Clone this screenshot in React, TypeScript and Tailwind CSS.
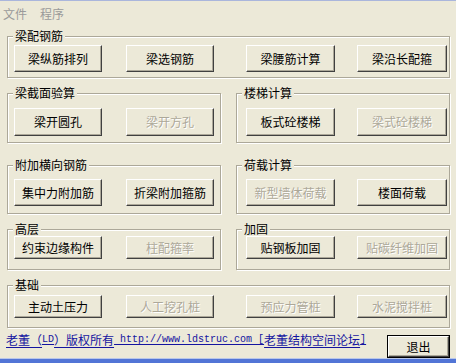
import React from "react";

function Btn({ label, disabled, cls }: { label: string; disabled?: boolean; cls: string }) {
  return (
    <div
      className={`${cls} shrink-0 flex items-center justify-center border border-t-white border-l-white border-r-[#404040] border-b-[#404040] shadow-[inset_-1px_-1px_0_#aca899] bg-[#ece9d8] text-[12px] leading-none ${
        disabled ? "text-[#aca899] [text-shadow:1px_1px_0_#ffffff]" : "text-black"
      }`}
    >
      {label}
    </div>
  );
}

function Group({ title, cls, children }: { title: string; cls: string; children: React.ReactNode }) {
  return (
    <div className={`relative shrink-0 border border-[#aca899] shadow-[1px_1px_0_#ffffff,inset_1px_1px_0_#ffffff] ${cls}`}>
      <div className="absolute left-[5px] -top-[8px] px-[2px] bg-[#ece9d8] text-[12px] leading-[14px] text-black whitespace-nowrap">
        {title}
      </div>
      {children}
    </div>
  );
}

export default function App() {
  return (
    <div className="w-[456px] h-[363px] bg-[#ece9d8] flex flex-col overflow-hidden font-['Noto_Sans_CJK_SC','Noto_Sans',sans-serif]">
      <div className="h-px bg-[#aab6dc] shrink-0" />
      <div className="h-[25px] shrink-0 flex items-center gap-[13px] pl-[3px] text-[12px] leading-none text-[#9a9a9a]">
        <span>文件</span>
        <span>程序</span>
      </div>

      {/* 梁配钢筋 */}
      <div className="mt-[10px] ml-[7px] flex">
        <Group title="梁配钢筋" cls="w-[443px] h-[42px] pt-[8px] pl-[6px] flex items-start">
          <Btn label="梁纵筋排列" cls="w-[88px] h-[27px]" />
          <Btn label="梁选钢筋" cls="w-[88px] h-[27px] ml-[24px]" />
          <Btn label="梁腰筋计算" cls="w-[89px] h-[27px] ml-[32px]" />
          <Btn label="梁沿长配箍" cls="w-[90px] h-[27px] ml-[22px]" />
        </Group>
      </div>

      {/* row 2 */}
      <div className="mt-[15px] ml-[7px] flex gap-[15px]">
        <Group title="梁截面验算" cls="w-[214px] h-[50px] pt-[14px] pl-[6px] flex items-start">
          <Btn label="梁开圆孔" cls="w-[88px] h-[28px]" />
          <Btn label="梁开方孔" disabled cls="w-[88px] h-[28px] ml-[24px]" />
        </Group>
        <Group title="楼梯计算" cls="w-[214px] h-[50px] pt-[14px] pl-[9px] flex items-start">
          <Btn label="板式砼楼梯" cls="w-[89px] h-[28px]" />
          <Btn label="梁式砼楼梯" disabled cls="w-[90px] h-[28px] ml-[22px]" />
        </Group>
      </div>

      {/* row 3 */}
      <div className="mt-[22px] ml-[7px] flex gap-[15px]">
        <Group title="附加横向钢筋" cls="w-[214px] h-[49px] pt-[13px] pl-[6px] flex items-start">
          <Btn label="集中力附加筋" cls="w-[88px] h-[27px]" />
          <Btn label="折梁附加箍筋" cls="w-[88px] h-[27px] ml-[24px]" />
        </Group>
        <Group title="荷载计算" cls="w-[214px] h-[49px] pt-[13px] pl-[9px] flex items-start">
          <Btn label="新型墙体荷载" disabled cls="w-[89px] h-[27px]" />
          <Btn label="楼面荷载" cls="w-[90px] h-[27px] ml-[22px]" />
        </Group>
      </div>

      {/* row 4 */}
      <div className="mt-[15px] ml-[7px] flex gap-[15px]">
        <Group title="高层" cls="w-[214px] h-[41px] pt-[6px] pl-[6px] flex items-start">
          <Btn label="约束边缘构件" cls="w-[88px] h-[23px]" />
          <Btn label="柱配箍率" disabled cls="w-[88px] h-[23px] ml-[24px]" />
        </Group>
        <Group title="加固" cls="w-[214px] h-[41px] pt-[6px] pl-[9px] flex items-start">
          <Btn label="贴钢板加固" cls="w-[89px] h-[23px]" />
          <Btn label="贴碳纤维加固" disabled cls="w-[90px] h-[23px] ml-[22px]" />
        </Group>
      </div>

      {/* 基础 */}
      <div className="mt-[15px] ml-[7px] flex">
        <Group title="基础" cls="w-[443px] h-[43px] pt-[9px] pl-[6px] flex items-start">
          <Btn label="主动土压力" cls="w-[88px] h-[23px]" />
          <Btn label="人工挖孔桩" disabled cls="w-[88px] h-[23px] ml-[24px]" />
          <Btn label="预应力管桩" disabled cls="w-[89px] h-[23px] ml-[32px]" />
          <Btn label="水泥搅拌桩" disabled cls="w-[90px] h-[23px] ml-[22px]" />
        </Group>
      </div>

      {/* footer */}
      <div className="flex-1 flex items-start">
        <div className="mt-[5px] pl-[6px] h-[14px] flex items-center whitespace-pre text-[12px] leading-[14px] text-[#1414a0] underline underline-offset-[2px]">
          <span>老董（</span>
          <span className="font-['Liberation_Mono',monospace] text-[10px]">LD</span>
          <span>）版权所有</span>
          <span className="font-['Liberation_Mono',monospace] text-[10px]"> http://www.ldstruc.com [</span>
          <span>老董结构空间论坛</span>
          <span className="font-['Liberation_Mono',monospace] text-[10px]">]</span>
        </div>
        <div className="ml-auto mr-[6px] mt-[7px] w-[63px] h-[23px] border border-black flex">
          <Btn label="退出" cls="w-full h-full" />
        </div>
      </div>
      <div className="h-px bg-[#b9c7ea] shrink-0" />
      <div className="h-[4px] bg-[#5275d6] shrink-0" />
    </div>
  );
}
